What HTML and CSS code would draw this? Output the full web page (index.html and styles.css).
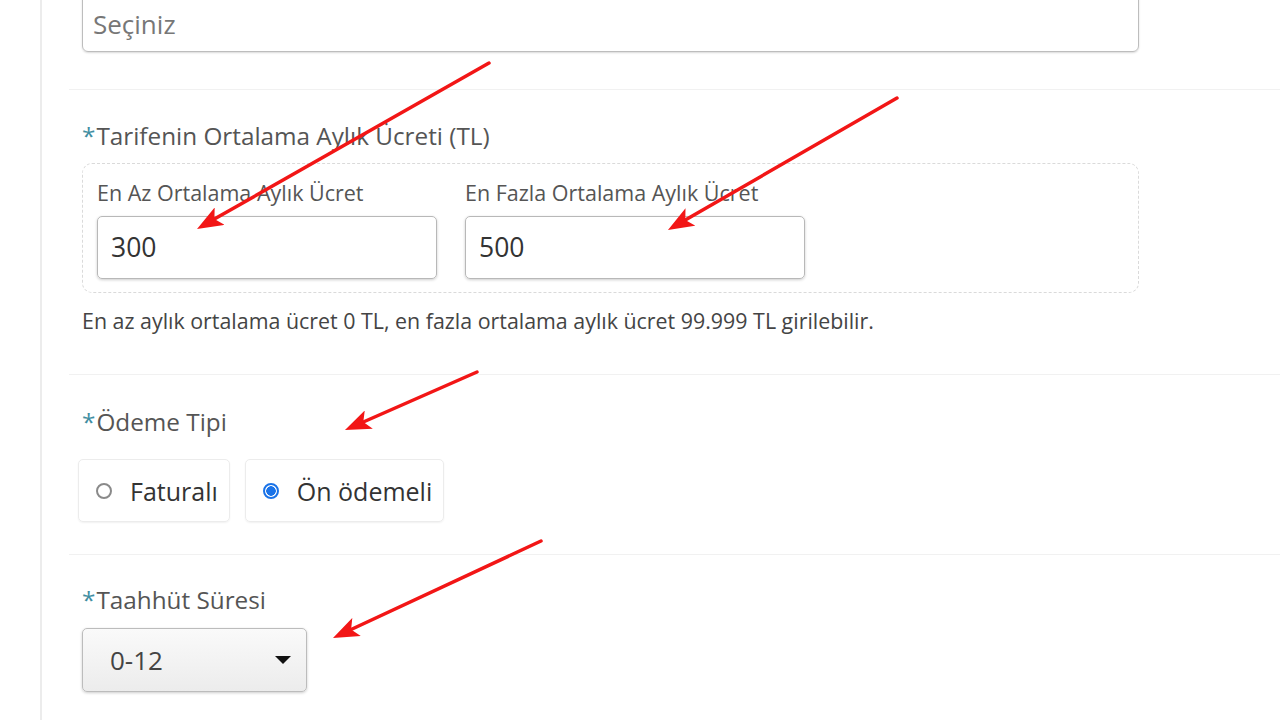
FILE: index.html
```html
<!DOCTYPE html>
<html lang="tr">
<head>
<meta charset="utf-8">
<title>Tarife Filtre</title>
<link rel="stylesheet" href="styles.css">
</head>
<body>
<div class="page">
  <div class="panel">
    <section class="block first">
      <div class="select-wide">Seçiniz</div>
    </section>

    <section class="block sep price">
      <div class="label"><span class="req">*</span>Tarifenin Ortalama Aylık Ücreti (TL)</div>
      <div class="range">
        <div class="field">
          <div class="sublabel">En Az Ortalama Aylık Ücret</div>
          <div class="input">300</div>
        </div>
        <div class="field">
          <div class="sublabel">En Fazla Ortalama Aylık Ücret</div>
          <div class="input">500</div>
        </div>
      </div>
      <div class="help">En az aylık ortalama ücret 0 TL, en fazla ortalama aylık ücret 99.999 TL girilebilir.</div>
    </section>

    <section class="block sep pay">
      <div class="label"><span class="req">*</span>Ödeme Tipi</div>
      <div class="radios">
        <div class="radio-box"><span class="radio"></span><span class="radio-text">Faturalı</span></div>
        <div class="radio-box"><span class="radio checked"></span><span class="radio-text">Ön ödemeli</span></div>
      </div>
    </section>

    <section class="block sep term">
      <div class="label"><span class="req">*</span>Taahhüt Süresi</div>
      <div class="dropdown"><span>0-12</span><span class="caret"></span></div>
    </section>
  </div>

  <svg class="arrows" width="1280" height="720" viewBox="0 0 1280 720">
    <defs>
      <marker id="ah" viewBox="0 0 26 20" refX="6" refY="10" markerWidth="26" markerHeight="20" markerUnits="userSpaceOnUse" orient="auto">
        <path d="M0,0 L26,10 L0,20 L6,10 z" fill="#f21616"/>
      </marker>
    </defs>
    <line x1="489" y1="63" x2="214.4" y2="219.1" class="arr" marker-end="url(#ah)"/>
    <line x1="897" y1="98" x2="685.3" y2="220" class="arr" marker-end="url(#ah)"/>
    <line x1="477" y1="372" x2="363.3" y2="422" class="arr" marker-end="url(#ah)"/>
    <line x1="541" y1="541" x2="351.1" y2="629.5" class="arr" marker-end="url(#ah)"/>
  </svg>
</div>
</body>
</html>
```

FILE: styles.css
```css
html, body {
  margin: 0;
  padding: 0;
  background: #fff;
}
body {
  font-family: "Open Sans", "Noto Sans", sans-serif;
  width: 1280px;
  height: 720px;
  overflow: hidden;
}
.page {
  position: relative;
  width: 1280px;
  height: 720px;
  overflow: hidden;
}
.panel {
  margin-left: 40px;
  border-left: 2px solid #ececec;
  height: 800px;
  padding-left: 27px;
}
.block {
  padding-left: 13px;
}
.sep {
  border-top: 1px solid #f1f1f1;
}
.first {
  margin-top: -11px;
  padding-bottom: 37px;
}
.select-wide {
  box-sizing: border-box;
  width: 1057px;
  height: 63px;
  border: 1px solid #bdbdbd;
  border-radius: 6px;
  box-shadow: 0 1px 2px rgba(0,0,0,0.15);
  padding: 14px 0 0 10px;
  font-size: 26px;
  line-height: 40px;
  color: #777;
}
.label {
  font-size: 24.3px;
  line-height: 32px;
  color: #555;
}
.req {
  color: #3f8ea2;
  margin-right: 1px;
}
.price {
  padding-top: 30px;
  padding-bottom: 40px;
}
.range {
  box-sizing: border-box;
  width: 1057px;
  margin-top: 11px;
  border: 1px dashed #dadada;
  border-radius: 10px;
  padding: 15px 14px 13px 14px;
  display: flex;
  gap: 28px;
}
.sublabel {
  font-size: 21.5px;
  line-height: 28px;
  color: #555;
  margin-bottom: 9px;
}
.input {
  box-sizing: border-box;
  width: 340px;
  height: 63px;
  border: 1px solid #b8b8b8;
  border-radius: 5px;
  box-shadow: 0 1px 3px rgba(0,0,0,0.2);
  padding-left: 13px;
  font-size: 26.5px;
  line-height: 61px;
  color: #333;
}
.help {
  margin-top: 15px;
  font-size: 21.4px;
  line-height: 26px;
  color: #444;
}
.pay {
  padding-top: 31px;
  padding-bottom: 32px;
}
.radios {
  display: flex;
  gap: 15px;
  margin-top: 21px;
  margin-left: -4px;
}
.radio-box {
  box-sizing: border-box;
  height: 63px;
  border: 1px solid #ececec;
  border-radius: 5px;
  box-shadow: 0 1px 2px rgba(0,0,0,0.06);
  display: flex;
  align-items: center;
  padding: 0 11px 0 17px;
}
.radio {
  box-sizing: border-box;
  width: 16px;
  height: 16px;
  border-radius: 50%;
  border: 2px solid #8a8a8a;
  margin-right: 18px;
  background: #fff;
}
.radio.checked {
  border-color: #1a73e8;
  background: radial-gradient(circle, #1a73e8 0 4.5px, #fff 5px);
}
.radio-text {
  font-size: 25px;
  line-height: 34px;
  color: #333;
}
.term {
  padding-top: 29px;
  padding-bottom: 40px;
}
.dropdown {
  box-sizing: border-box;
  margin-top: 12px;
  width: 225px;
  height: 64px;
  border: 1px solid #bcbcbc;
  border-radius: 5px;
  background: linear-gradient(#fafafa, #ececec);
  box-shadow: 0 1px 3px rgba(0,0,0,0.2);
  display: flex;
  align-items: center;
  justify-content: space-between;
  padding: 0 15px 0 27px;
  font-size: 26px;
  color: #444;
}
.caret {
  width: 0;
  height: 0;
  border-left: 8px solid transparent;
  border-right: 8px solid transparent;
  border-top: 8px solid #111;
}
.arrows {
  position: absolute;
  left: 0;
  top: 0;
  pointer-events: none;
}
.arr {
  stroke: #f21616;
  stroke-width: 3.5;
  stroke-linecap: round;
}
```
